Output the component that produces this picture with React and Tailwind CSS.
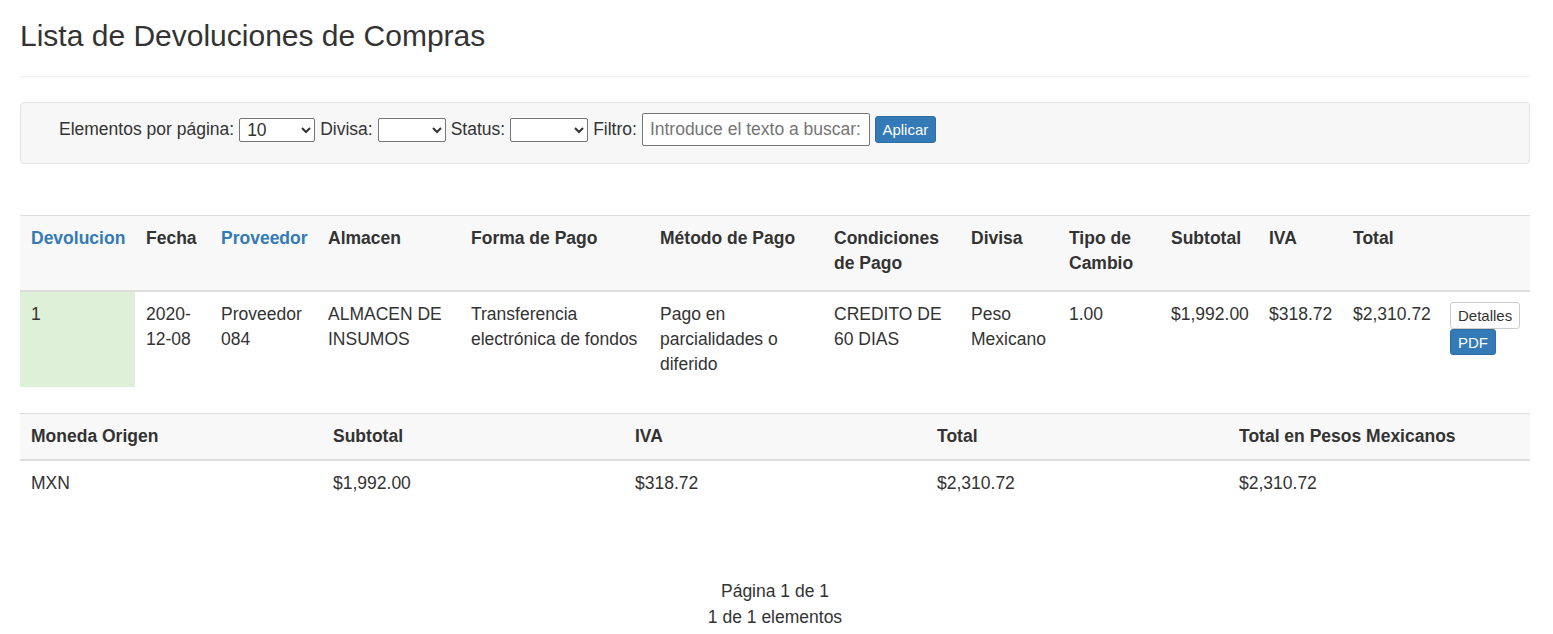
import React from 'react';

const cols = [
  { label: 'Devolucion', link: true, w: 'w-[115px]' },
  { label: 'Fecha', w: 'w-[75px]' },
  { label: 'Proveedor', link: true, w: 'w-[107px]' },
  { label: 'Almacen', w: 'w-[143px]' },
  { label: 'Forma de Pago', w: 'w-[189px]' },
  { label: 'Método de Pago', w: 'w-[174px]' },
  { label: 'Condiciones de Pago', w: 'w-[137px]' },
  { label: 'Divisa', w: 'w-[98px]' },
  { label: 'Tipo de Cambio', w: 'w-[102px]' },
  { label: 'Subtotal', w: 'w-[98px]' },
  { label: 'IVA', w: 'w-[84px]' },
  { label: 'Total', w: 'w-[97px]' },
  { label: '', w: 'w-[91px]' },
];

const row = [
  '2020-12-08',
  'Proveedor 084',
  'ALMACEN DE INSUMOS',
  'Transferencia electrónica de fondos',
  'Pago en parcialidades o diferido',
  'CREDITO DE 60 DIAS',
  'Peso Mexicano',
  '1.00',
  '$1,992.00',
  '$318.72',
  '$2,310.72',
];

const resumen = ['Moneda Origen', 'Subtotal', 'IVA', 'Total', 'Total en Pesos Mexicanos'];
const resumenRow = ['MXN', '$1,992.00', '$318.72', '$2,310.72', '$2,310.72'];

export default function App() {
  return (
    <div className="min-h-screen bg-white text-[#333] text-[17.5px] leading-[25px]" style={{ fontFamily: '"Liberation Sans", Arial, sans-serif' }}>
      <div className="w-[1510px] ml-[20px]">
        <h1 className="pt-[19px] text-[30px] leading-[33px] font-normal">Lista de Devoluciones de Compras</h1>
        <hr className="mt-[24px] border-t border-[#eee]" />

        {/* filtros */}
        <div className="mt-[25px] bg-[#f7f7f7] border border-[#e3e3e3] rounded-[4px] pl-[38px] pt-[10px] pb-[17px]">
          <div className="flex items-center gap-[5px]">
            <span>Elementos por página:</span>
            <select className="w-[76px] h-[24px] border border-[#767676] rounded-[2px] bg-white text-[17.5px] leading-[20px] pl-[3px]" defaultValue="10">
              <option>10</option>
              <option>20</option>
              <option>50</option>
            </select>
            <span>Divisa:</span>
            <select className="w-[68px] h-[24px] border border-[#767676] rounded-[2px] bg-white">
              <option></option>
            </select>
            <span>Status:</span>
            <select className="w-[78px] h-[24px] border border-[#767676] rounded-[2px] bg-white">
              <option></option>
            </select>
            <span>Filtro:</span>
            <input
              className="w-[228px] h-[33px] border border-[#767676] rounded-[2px] bg-white px-[7px] text-[17.5px] placeholder:text-[#757575]"
              placeholder="Introduce el texto a buscar:"
            />
            <button className="w-[61px] h-[27px] rounded-[3px] bg-[#337ab7] border border-[#2e6da4] text-white text-[15px] leading-none">
              Aplicar
            </button>
          </div>
        </div>

        {/* tabla principal */}
        <table className="mt-[51px] w-[1510px] table-fixed border-collapse">
          <thead>
            <tr className="bg-[#f8f8f8] border-t border-[#ddd] border-b-2">
              {cols.map((c, i) => (
                <th
                  key={i}
                  className={`${c.w} text-left align-top font-bold pl-[11px] pr-[6px] pt-[10px] pb-[14px] ${c.link ? 'text-[#337ab7]' : 'text-[#333]'}`}
                >
                  {c.label}
                </th>
              ))}
            </tr>
          </thead>
          <tbody>
            <tr className="align-top">
              <td className="bg-[#dff0d8] pl-[11px] pr-[6px] pt-[10px] pb-[10px]">1</td>
              {row.map((v, i) => (
                <td key={i} className="pl-[11px] pr-[4px] pt-[10px] pb-[10px]">{v}</td>
              ))}
              <td className="pl-[11px] pr-[6px] pt-[10px]">
                <div className="flex flex-col items-start">
                  <button className="h-[27px] px-[7px] border border-[#ccc] rounded-[3px] bg-white text-[15px] leading-none text-[#333]">Detalles</button>
                  <button className="h-[26px] px-[7px] border border-[#2e6da4] rounded-[3px] bg-[#337ab7] text-[15px] leading-none text-white">PDF</button>
                </div>
              </td>
            </tr>
          </tbody>
        </table>

        {/* resumen */}
        <table className="mt-[26px] w-[1510px] table-fixed border-collapse">
          <thead>
            <tr className="bg-[#f8f8f8] border-t border-[#ddd] border-b-2">
              {resumen.map((h) => (
                <th key={h} className="text-left font-bold pl-[11px] py-[10px]">{h}</th>
              ))}
            </tr>
          </thead>
          <tbody>
            <tr>
              {resumenRow.map((v, i) => (
                <td key={i} className="pl-[11px] py-[10px]">{v}</td>
              ))}
            </tr>
          </tbody>
        </table>

        {/* paginacion */}
        <div className="mt-[72px] text-center leading-[26px]">
          <div>Página 1 de 1</div>
          <div>1 de 1 elementos</div>
        </div>
      </div>
    </div>
  );
}
